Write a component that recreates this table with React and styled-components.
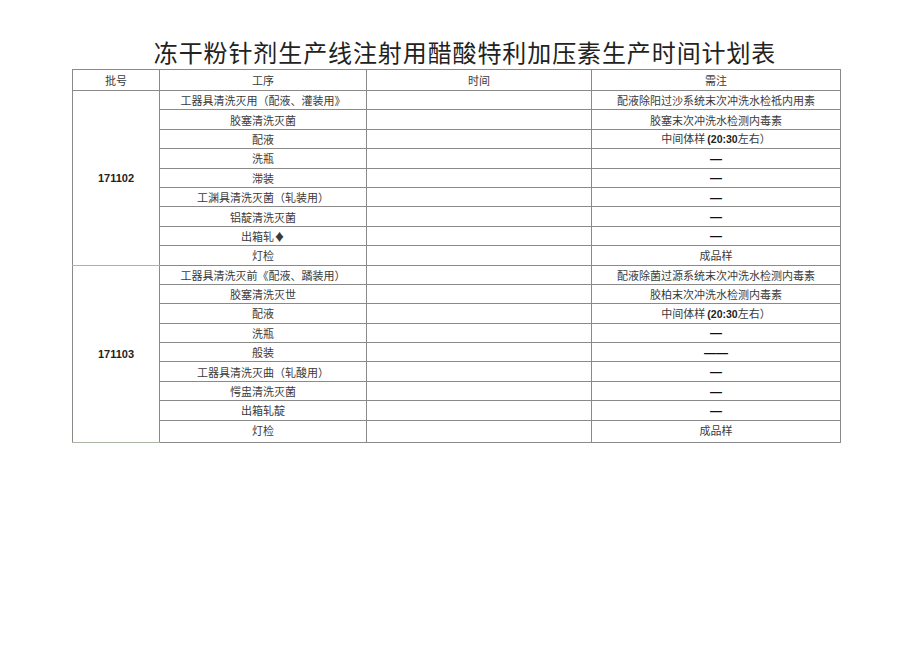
import React from "react";
import styled, { createGlobalStyle } from "styled-components";

const Global = createGlobalStyle`
  html, body { margin: 0; padding: 0; background: #fff; }
  body { font-family: "Noto Sans CJK SC", "Liberation Serif", sans-serif; }
`;

const Page = styled.div`
  width: 920px;
  height: 651px;
  padding-top: 37px;
  box-sizing: border-box;
`;

const Title = styled.h1`
  margin: 0 0 2px 0;
  padding-left: 10px;
  text-align: center;
  font-family: "Noto Sans CJK SC", sans-serif;
  font-weight: 400;
  font-size: 24px;
  line-height: 30px;
  letter-spacing: 0.9px;
  color: #222;
`;

const Table = styled.table`
  margin-left: 72px;
  width: 768px;
  border-collapse: collapse;
  table-layout: fixed;
  border: 1.5px solid #5a4c5a;
  color: #3a3a3a;
  font-size: 11px;
`;

const Col = styled.col`
  width: ${(p) => p.$w}px;
`;

const Cell = styled.td`
  height: ${(p) => p.$h || 19.4}px;
  padding: ${(p) => (p.$top ? "1px 0 0" : "0")};
  vertical-align: ${(p) => (p.$top ? "top" : "middle")};
  text-align: center;
  line-height: 16px;
  white-space: nowrap;
  border: 1px solid #8a8a8a;
  border-left: 1px solid ${(p) => (p.$light ? "#b9c2b2" : "#8a8a8a")};
  box-sizing: border-box;
`;

const HeadCell = styled(Cell).attrs({ as: "th" })`
  font-weight: 400;
  height: 21px;
`;

const Batch = styled(Cell)`
  font-family: "Liberation Sans", sans-serif;
  font-weight: 700;
  font-size: 11px;
  color: #222;
  border-bottom: 1px solid #a9b4a4;
`;

const Bold = styled.b`
  font-family: "Liberation Sans", sans-serif;
  font-weight: 700;
  font-size: 10.5px;
  color: #222;
  margin-left: 2px;
`;

const Dash = styled.span`
  font-family: "Liberation Sans", sans-serif;
  font-weight: 700;
  font-size: 12px;
  color: #111;
`;

const mid = (
  <>
    中间体样<Bold>(20:30</Bold>左右）
  </>
);

const groups = [
  {
    batch: "171102",
    rows: [
      ["工器具清洗灭用（配液、灌装用》", "配液除阳过沙系统末次冲洗水检祗内用素"],
      ["胶塞清洗灭菌", "胶塞末次冲洗水检测内毒素"],
      ["配液", mid],
      ["洗瓶", <Dash>—</Dash>],
      ["滞装", <Dash>—</Dash>],
      ["工渊具清洗灭菌（轧装用）", <Dash>—</Dash>],
      ["铝靛清洗灭菌", <Dash>—</Dash>],
      ["出箱轧♦", <Dash>—</Dash>],
      ["灯检", "成品样"],
    ],
  },
  {
    batch: "171103",
    rows: [
      ["工器具清洗灭前《配液、蹫装用）", "配液除菌过源系统末次冲洗水检测内毒素"],
      ["胶塞清洗灭世", "胶柏末次冲洗水检测内毒素"],
      ["配液", mid],
      ["洗瓶", <Dash>—</Dash>],
      ["般装", <Dash>——</Dash>],
      ["工器具清洗灭曲（轧酸用）", <Dash>—</Dash>],
      ["愕盅清洗灭菌", <Dash>—</Dash>],
      ["出箱轧靛", <Dash>—</Dash>],
      ["灯检", "成品样"],
    ],
  },
];

export default function App() {
  return (
    <Page>
      <Global />
      <Title>冻干粉针剂生产线注射用醋酸特利加压素生产时间计划表</Title>
      <Table>
        <colgroup>
          <Col $w={87} />
          <Col $w={207} />
          <Col $w={225} />
          <Col $w={249} />
        </colgroup>
        <thead>
          <tr>
            <HeadCell>批号</HeadCell>
            <HeadCell $light>工序</HeadCell>
            <HeadCell>时间</HeadCell>
            <HeadCell>需注</HeadCell>
          </tr>
        </thead>
        <tbody>
          {groups.map((g, gi) =>
            g.rows.map((r, ri) => {
              const last = gi === groups.length - 1 && ri === g.rows.length - 1;
              return (
                <tr key={`${gi}-${ri}`}>
                  {ri === 0 && <Batch rowSpan={g.rows.length}>{g.batch}</Batch>}
                  <Cell $light $h={last ? 22 : 19.4} $top={last}>
                    {r[0]}
                  </Cell>
                  <Cell $h={last ? 22 : 19.4} $top={last} />
                  <Cell $h={last ? 22 : 19.4} $top={last}>
                    {r[1]}
                  </Cell>
                </tr>
              );
            })
          )}
        </tbody>
      </Table>
    </Page>
  );
}
